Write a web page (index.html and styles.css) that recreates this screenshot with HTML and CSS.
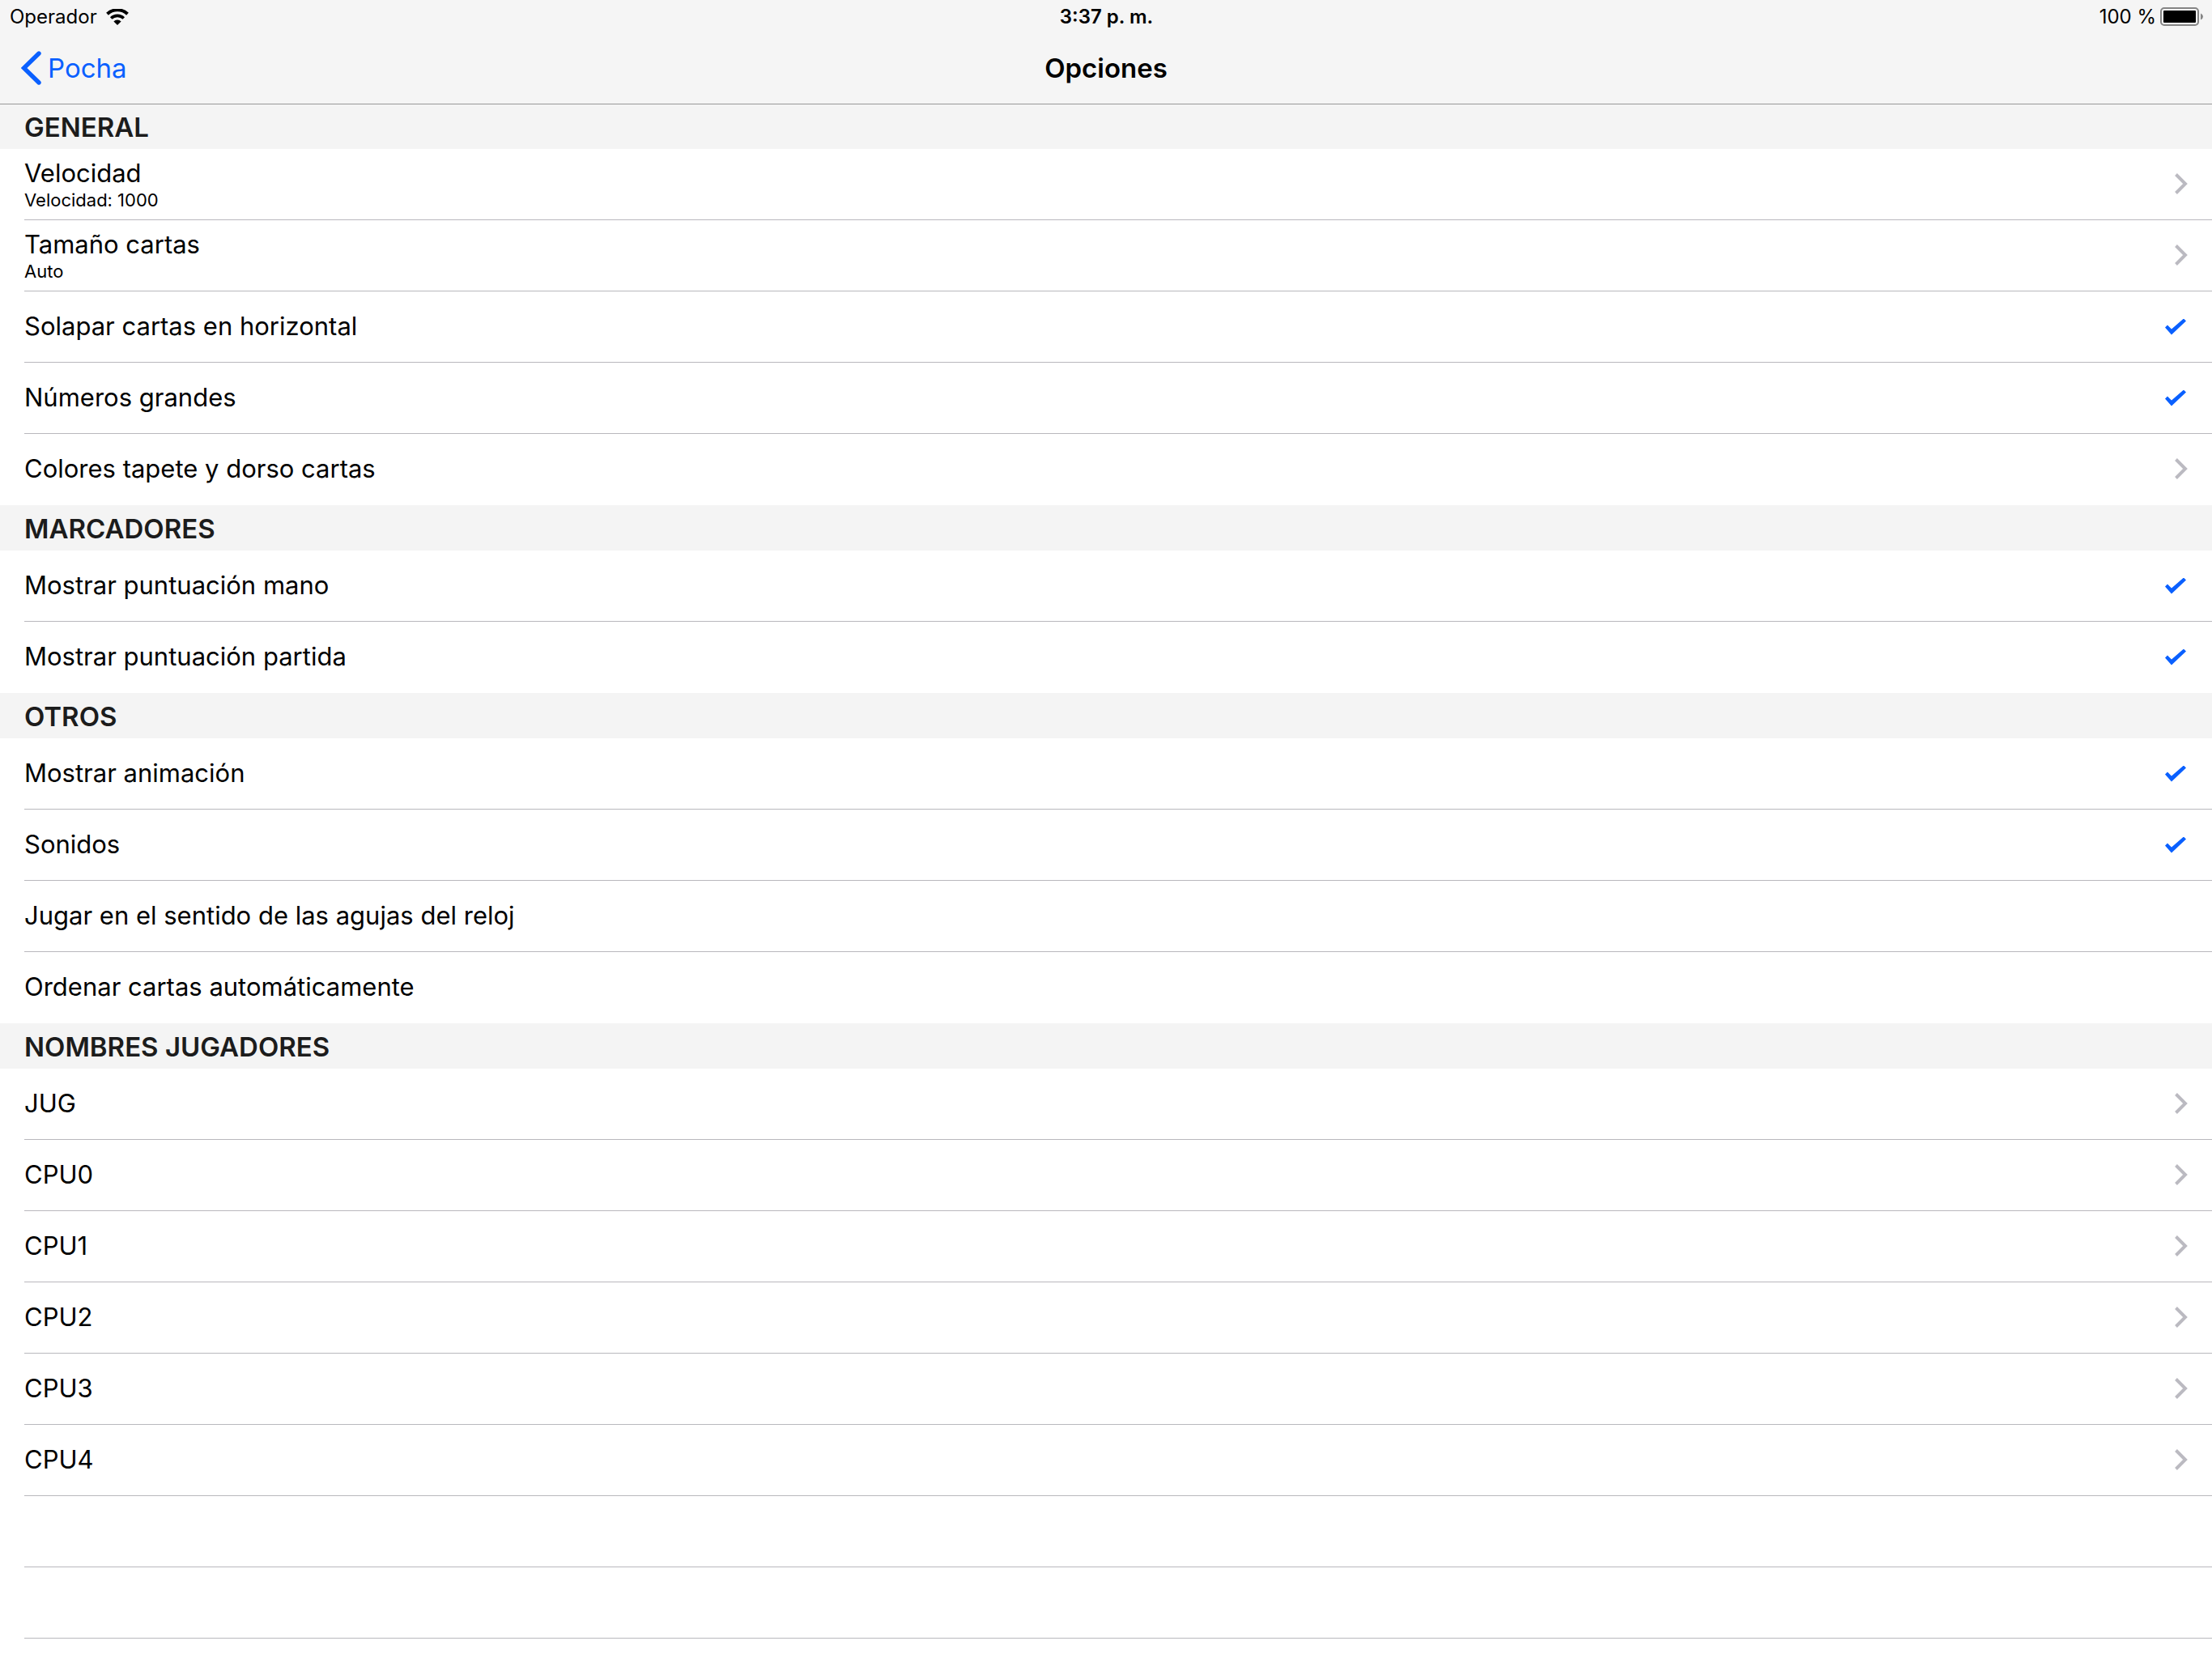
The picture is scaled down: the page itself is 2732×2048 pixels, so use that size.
FILE: index.html
```html
<!DOCTYPE html>
<html lang="es">
<head>
    <meta charset="UTF-8">
    <meta name="viewport" content="width=device-width, initial-scale=1.0">
    <title>Opciones</title>
    <link rel="stylesheet" href="styles.css">
</head>
<body>
<!-- Shared chevron for the rows that open another screen -->
<svg width="0" height="0" class="symbols" aria-hidden="true">
    <symbol id="chevron" viewBox="0 0 16 26">
        <path d="M1.5 1.5 13 13 1.5 24.5" fill="none" stroke="currentColor" stroke-width="4"/>
    </symbol>
</svg>
<header class="top">
    <div class="status-bar">
        <div class="status-left">
            <span>Operador</span>
            <svg class="wifi" width="28" height="20" viewBox="0 0 28 20" aria-hidden="true">
                <path d="M1.5 6.3a18 18 0 0 1 25 0" fill="none" stroke="#000" stroke-width="4"/>
                <path d="M6.2 11.5a11.3 11.3 0 0 1 15.6 0" fill="none" stroke="#000" stroke-width="3.6"/>
                <path d="M14 20 9.4 15.4a6.6 6.6 0 0 1 9.2 0z"/>
            </svg>
        </div>
        <strong class="status-time">3:37 p. m.</strong>
        <div class="status-right">
            <span>100 %</span>
            <svg class="battery" width="53" height="23" viewBox="0 0 53 23" aria-hidden="true">
                <rect x="1" y="1" width="46" height="21" rx="4" fill="none" stroke="#858585" stroke-width="2"/>
                <rect x="4" y="4" width="40" height="15" rx="1"/>
                <path d="M50 7.5q3 1.5 3 4t-3 4z" fill="#858585"/>
            </svg>
        </div>
    </div>
    <nav class="nav-bar">
        <a class="back" href="#">
            <svg width="25" height="42" viewBox="0 0 25 42" aria-hidden="true">
                <path d="M22 3 3.5 21 22 39" fill="none" stroke="currentColor" stroke-width="5.4" stroke-linecap="round"/>
            </svg>
            Pocha
        </a>
        <h1>Opciones</h1>
    </nav>
</header>
<main>
    <section>
        <h2>GENERAL</h2>
        <ul>
            <li>
                <a class="row" href="#velocidad">
                    <span class="text">Velocidad<small>Velocidad: 1000</small></span>
                    <svg class="chevron"><use href="#chevron"/></svg>
                </a>
            </li>
            <li>
                <a class="row" href="#tamano">
                    <span class="text">Tamaño cartas<small>Auto</small></span>
                    <svg class="chevron"><use href="#chevron"/></svg>
                </a>
            </li>
            <li><label class="row">Solapar cartas en horizontal<input type="checkbox" checked></label></li>
            <li><label class="row">Números grandes<input type="checkbox" checked></label></li>
            <li><a class="row" href="#colores">Colores tapete y dorso cartas<svg class="chevron"><use href="#chevron"/></svg></a></li>
        </ul>
    </section>
    <section>
        <h2>MARCADORES</h2>
        <ul>
            <li><label class="row">Mostrar puntuación mano<input type="checkbox" checked></label></li>
            <li><label class="row">Mostrar puntuación partida<input type="checkbox" checked></label></li>
        </ul>
    </section>
    <section>
        <h2>OTROS</h2>
        <ul>
            <li><label class="row">Mostrar animación<input type="checkbox" checked></label></li>
            <li><label class="row">Sonidos<input type="checkbox" checked></label></li>
            <li><label class="row">Jugar en el sentido de las agujas del reloj<input type="checkbox"></label></li>
            <li><label class="row">Ordenar cartas automáticamente<input type="checkbox"></label></li>
        </ul>
    </section>
    <section>
        <h2>NOMBRES JUGADORES</h2>
        <ul>
            <li><a class="row" href="#jug">JUG<svg class="chevron"><use href="#chevron"/></svg></a></li>
            <li><a class="row" href="#cpu0">CPU0<svg class="chevron"><use href="#chevron"/></svg></a></li>
            <li><a class="row" href="#cpu1">CPU1<svg class="chevron"><use href="#chevron"/></svg></a></li>
            <li><a class="row" href="#cpu2">CPU2<svg class="chevron"><use href="#chevron"/></svg></a></li>
            <li><a class="row" href="#cpu3">CPU3<svg class="chevron"><use href="#chevron"/></svg></a></li>
            <li><a class="row" href="#cpu4">CPU4<svg class="chevron"><use href="#chevron"/></svg></a></li>
        </ul>
    </section>
    <!-- Empty rows below the last section -->
    <div class="filler"></div>
    <div class="filler"></div>
</main>
</body>
</html>
```
FILE: styles.css
```css
* {
    box-sizing: border-box;
}

body {
    font-family: Inter, "Liberation Sans", sans-serif;
    font-size: 31px;
    line-height: 40px;
    margin: 0;
    background-color: #fff;
    color: #000;
}

a {
    color: inherit;
    text-decoration: none;
}

.symbols {
    position: absolute;
}

.top {
    position: relative;
    background-color: #f5f5f5;
    box-shadow: 0 1px #989898;
}

.status-bar {
    display: grid;
    grid-template-columns: 1fr auto 1fr;
    align-items: center;
    height: 41px;
    padding: 0 11px 0 12px;
    font-size: 24px;
}

.status-left,
.status-right {
    display: flex;
    align-items: center;
}

.status-left {
    gap: 11px;
}

.status-right {
    justify-content: flex-end;
    gap: 5px;
}

.status-time {
    font-weight: 600;
}

.nav-bar {
    display: grid;
    grid-template-columns: 1fr auto 1fr;
    align-items: center;
    height: 87px;
    padding: 0 26px 2px;
}

.back {
    display: flex;
    align-items: center;
    gap: 8px;
    font-size: 33px;
    color: #0a60ff;
}

h1 {
    margin: 0;
    font-size: 33px;
    font-weight: 600;
}

h2 {
    margin: 0;
    padding: 9px 30px 7px;
    background-color: #f4f4f4;
    color: #1c1c1c;
    font-size: 33px;
    font-weight: 600;
}

ul {
    margin: 0;
    padding: 0;
    list-style: none;
}

li,
.filler {
    height: 88px;
    margin-left: 30px;
    border-bottom: 1px solid #b9b8bd;
}

section:not(:last-of-type) li:last-child {
    border-bottom-color: transparent;
}

.row {
    display: flex;
    align-items: center;
    justify-content: space-between;
    height: 100%;
    padding: 0 30px 2px 0;
}

.text {
    display: flex;
    flex-direction: column;
}

small {
    font-size: 22px;
    line-height: 26px;
}

.chevron {
    width: 16px;
    height: 26px;
    color: #bbbac1;
}

/* The tick is the checkbox itself, cut to shape */
input[type="checkbox"] {
    appearance: none;
    width: 26px;
    height: 20px;
    margin: 2px 2px 0 0;
    clip-path: polygon(0 11px, 3px 8px, 8px 13px, 23px 0, 26px 3px, 8px 20px);
}

input[type="checkbox"]:checked {
    background-color: #0a60ff;
}
```
